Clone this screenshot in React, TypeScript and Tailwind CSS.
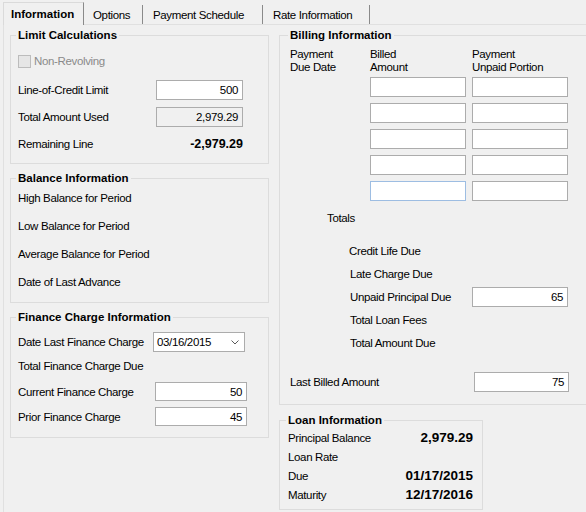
import React, { ReactNode } from 'react';

interface GroupProps {
  title: string;
  className?: string;
  children: ReactNode;
}

// WinForms-style group box drawn with a native fieldset
function Group({ title, className = '', children }: GroupProps) {
  return (
    <fieldset className={`border border-[#dcdcdc] ${className}`}>
      <legend className="ml-[-2px] px-[2px] text-[11.5px] font-bold leading-[14px] tracking-normal">{title}</legend>
      {children}
    </fieldset>
  );
}

interface TextBoxProps {
  value?: string;
  className?: string;
}

function TextBox({ value = '', className = '' }: TextBoxProps) {
  return (
    <div className={`flex items-center justify-end border pr-[4px] ${className}`}>{value}</div>
  );
}

function Row({ cols, children, className = '' }: { cols: string; children: ReactNode; className?: string }) {
  return <div className={`grid items-center ${cols} ${className}`}>{children}</div>;
}

function Tabs() {
  return (
    <div className="flex h-[24px] items-end pl-[3px]">
      <div className="relative z-10 -mb-px flex h-[23px] w-[81px] items-start border-l border-t border-r border-l-[#dadada] border-t-[#dadada] border-r-[#8a8a8a] bg-[#f0f0f0] pl-[7px] pt-[4px] font-bold tracking-normal">
        Information
      </div>
      <div className="flex h-[19px] w-[59px] items-center border-r border-[#8a8a8a] pl-[9px]">Options</div>
      <div className="flex h-[19px] w-[120px] items-center border-r border-[#8a8a8a] pl-[10px]">Payment Schedule</div>
      <div className="flex h-[19px] w-[107px] items-center border-r border-[#8a8a8a] pl-[10px]">Rate Information</div>
    </div>
  );
}

function LeftColumn() {
  return (
    <div className="flex w-[259px] shrink-0 flex-col">
      <Group title="Limit Calculations" className="px-[7px] pt-[9px] pb-[9px]">
        <div className="flex flex-col gap-[7px]">
          <div className="mb-[2px] flex h-[20px] items-center gap-[3px]">
            <div className="h-[13px] w-[13px] border border-[#bcbcbc] bg-[#e6e6e6]" />
            <span className="text-[#8a8a8a]">Non-Revolving</span>
          </div>
          <Row cols="grid-cols-[138px_87px]" className="h-[20px]">
            <span>Line-of-Credit Limit</span>
            <TextBox value="500" className="h-[20px] border-[#acacac] bg-white" />
          </Row>
          <Row cols="grid-cols-[138px_87px]" className="h-[20px]">
            <span>Total Amount Used</span>
            <TextBox value="2,979.29" className="h-[20px] border-[#acacac] bg-[#f0f0f0]" />
          </Row>
          <Row cols="grid-cols-[138px_87px]" className="h-[20px]">
            <span>Remaining Line</span>
            <span className="text-right text-[12.5px] font-bold tracking-normal">-2,979.29</span>
          </Row>
        </div>
      </Group>

      <Group title="Balance Information" className="mt-[7px] px-[7px] pt-[3px] pb-[10px]">
        <div className="flex flex-col gap-[8px]">
          {['High Balance for Period', 'Low Balance for Period', 'Average Balance for Period', 'Date of Last Advance'].map(
            (label) => (
              <div key={label} className="flex h-[20px] items-center">
                {label}
              </div>
            )
          )}
        </div>
      </Group>

      <Group title="Finance Charge Information" className="mt-[7px] px-[7px] pt-[8px] pb-[11px]">
        <Row cols="grid-cols-[135px_92px]" className="h-[20px]">
          <span>Date Last Finance Charge</span>
          <div className="flex h-[20px] items-center justify-between border border-[#acacac] bg-white pl-[3px] pr-[5px]">
            <span>03/16/2015</span>
            <svg width="8" height="5" viewBox="0 0 8 5">
              <path d="M0.5 0.5 L4 4 L7.5 0.5" stroke="#5a5a5a" strokeWidth="1" fill="none" />
            </svg>
          </div>
        </Row>
        <div className="mt-[4px] flex h-[20px] items-center">Total Finance Charge Due</div>
        <Row cols="grid-cols-[137px_92px]" className="mt-[6px] h-[19px]">
          <span>Current Finance Charge</span>
          <TextBox value="50" className="h-[19px] border-[#acacac] bg-white" />
        </Row>
        <Row cols="grid-cols-[137px_92px]" className="mt-[6px] h-[19px]">
          <span>Prior Finance Charge</span>
          <TextBox value="45" className="h-[19px] border-[#acacac] bg-white" />
        </Row>
      </Group>
    </div>
  );
}

function RightColumn() {
  const rows = [0, 1, 2, 3, 4];
  return (
    <div className="flex w-[320px] shrink-0 flex-col">
      <Group title="Billing Information" className="pl-[10px] pt-[6px] pb-[12px]">
        <div className="grid grid-cols-[74px_96px_96px] gap-x-[6px] leading-[13px]">
          <div>
            Payment
            <br />
            Due Date
          </div>
          <div>
            Billed
            <br />
            Amount
          </div>
          <div>
            Payment
            <br />
            Unpaid Portion
          </div>
        </div>
        <div className="mt-[3px] grid grid-cols-[74px_96px_96px] gap-x-[6px] gap-y-[6px]">
          {rows.map((i) => (
            <React.Fragment key={i}>
              <div />
              <TextBox className={`h-[20px] bg-white ${i === 4 ? 'border-[#9dbde2]' : 'border-[#acacac]'}`} />
              <TextBox className="h-[20px] border-[#acacac] bg-white" />
            </React.Fragment>
          ))}
        </div>
        <div className="mt-[10px] h-[14px] pl-[37px]">Totals</div>
        <div className="mt-[16px] flex flex-col gap-[3px]">
          <div className="flex h-[20px] items-center pl-[59px]">Credit Life Due</div>
          <div className="flex h-[20px] items-center pl-[60px]">Late Charge Due</div>
          <Row cols="grid-cols-[176px_96px]" className="h-[20px] gap-x-[6px]">
            <span className="pl-[60px]">Unpaid Principal Due</span>
            <TextBox value="65" className="h-[20px] border-[#acacac] bg-white" />
          </Row>
          <div className="flex h-[20px] items-center pl-[60px]">Total Loan Fees</div>
          <div className="flex h-[20px] items-center pl-[60px]">Total Amount Due</div>
        </div>
        <Row cols="grid-cols-[184px_95px]" className="mt-[19px] h-[20px]">
          <span>Last Billed Amount</span>
          <TextBox value="75" className="h-[20px] border-[#acacac] bg-white" />
        </Row>
      </Group>

      <Group title="Loan Information" className="mt-[8px] w-[204px] pl-[8px] pr-[9px] pt-[1px] pb-[5px]">
        {[
          ['Principal Balance', '2,979.29'],
          ['Loan Rate', ''],
          ['Due', '01/17/2015'],
          ['Maturity', '12/17/2016'],
        ].map(([label, value]) => (
          <div key={label} className="flex h-[19px] items-center justify-between">
            <span>{label}</span>
            <span className="text-[13.5px] font-bold tracking-normal">{value}</span>
          </div>
        ))}
      </Group>
    </div>
  );
}

export default function App() {
  return (
    <div className="h-[512px] w-[586px] overflow-hidden bg-[#f0f0f0] font-['Liberation_Sans',Arial,sans-serif] text-[11.5px] leading-[14px] tracking-[-0.35px] text-black">
      <Tabs />
      <div className="ml-[3px] flex h-[488px] gap-[10px] border-l border-t border-[#e0e0e0] pl-[6px] pt-[3px]">
        <LeftColumn />
        <RightColumn />
      </div>
    </div>
  );
}
